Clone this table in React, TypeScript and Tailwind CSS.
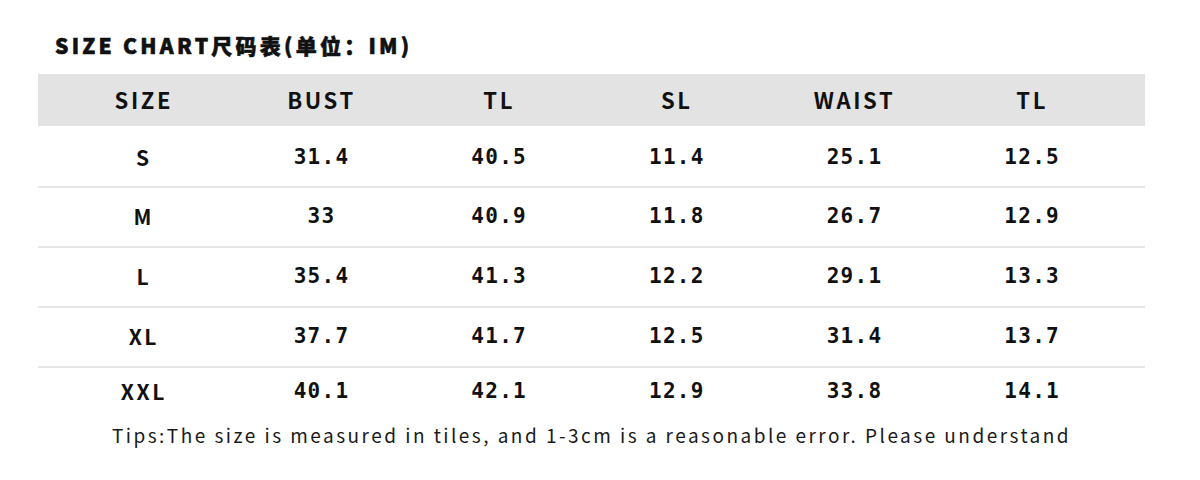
import React from 'react';

const heads = ['SIZE', 'BUST', 'TL', 'SL', 'WAIST', 'TL'];

const rows = [
  ['S', '31.4', '40.5', '11.4', '25.1', '12.5'],
  ['M', '33', '40.9', '11.8', '26.7', '12.9'],
  ['L', '35.4', '41.3', '12.2', '29.1', '13.3'],
  ['XL', '37.7', '41.7', '12.5', '31.4', '13.7'],
  ['XXL', '40.1', '42.1', '12.9', '33.8', '14.1'],
];

const sans = "font-['Noto_Sans_CJK_SC','Noto_Sans',sans-serif]";

export default function App() {
  return (
    <div className="w-[1200px] h-[480px] bg-white text-[#111]">
      {/* title */}
      <div className={`pt-[31px] pl-[55px] h-[74px] text-[21px] leading-[28px] font-black tracking-[0.155em] [-webkit-text-stroke:0.6px_#111] ${sans}`}>
        SIZE CHART尺码表(单位：IM)
      </div>

      <div className="mx-[38px] w-[1107px]">
        {/* header band */}
        <div className={`grid grid-cols-6 h-[52px] items-center bg-[#e3e3e3] pl-[17px] pr-[24px] text-[22px] font-bold tracking-[0.12em] ${sans}`}>
          {heads.map((h, i) => (
            <div key={i} className="text-center pb-[2px]">{h}</div>
          ))}
        </div>

        {rows.map((r, i) => (
          <div
            key={r[0]}
            className={`grid grid-cols-6 items-center pl-[17px] pr-[24px] ${
              i === 0 ? 'h-[60px] pt-[4px]' : i === rows.length - 1 ? 'h-[50px] border-t-2 border-[#e6e6e6]' : 'h-[60px] border-t-2 border-[#e6e6e6]'
            }`}
          >
            {r.map((c, j) => (
              <div
                key={j}
                className={`text-center text-[21px] font-bold ${
                  j === 0 ? `${sans} tracking-[0.12em]` : "font-['DejaVu_Sans_Mono',monospace] tracking-[0.06em]"
                }`}
              >
                {c}
              </div>
            ))}
          </div>
        ))}

        {/* tips */}
        <div className={`mt-[6px] text-center text-[19px] leading-[26px] tracking-[0.13em] text-[#1a1a1a] ${sans}`}>
          Tips:The size is measured in tiles, and 1-3cm is a reasonable error. Please understand
        </div>
      </div>
    </div>
  );
}
